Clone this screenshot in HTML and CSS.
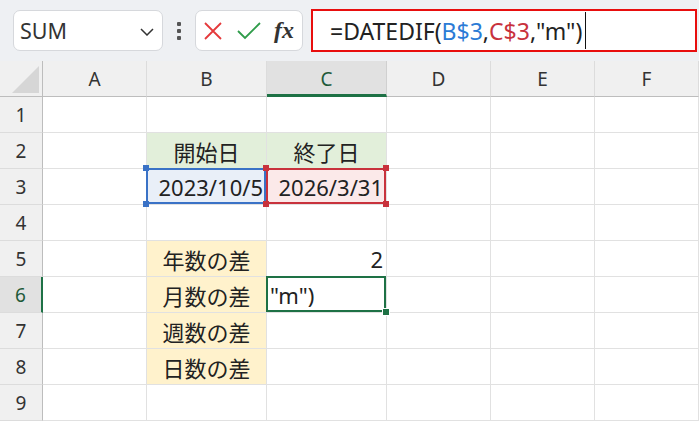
FILE: index.html
```html
<!DOCTYPE html>
<html lang="ja">
<head>
<meta charset="utf-8">
<link rel="stylesheet" href="styles.css">
</head>
<body>
<div class="toolbar">
  <div class="namebox">
    <span class="name">SUM</span>
    <svg class="chev" width="14" height="8" viewBox="0 0 14 8"><path d="M1 1 L7 7 L13 1" fill="none" stroke="#333" stroke-width="1.5"/></svg>
  </div>
  <div class="dots"><i></i><i></i><i></i></div>
  <div class="iconbox">
    <svg width="18" height="18" viewBox="0 0 18 18"><path d="M1 1 L17 17 M17 1 L1 17" stroke="#e5393b" stroke-width="1.8" fill="none"/></svg>
    <svg width="24" height="18" viewBox="0 0 24 18"><path d="M1 9 L8 16 L23 1" stroke="#2f9c4a" stroke-width="1.8" fill="none"/></svg>
    <span class="fx">fx</span>
  </div>
  <div class="formula"><span>=DATEDIF(</span><span class="ref-b">B$3</span><span>,</span><span class="ref-c">C$3</span><span>,"m")</span><span class="caret"></span></div>
</div>
<div class="grid">
  <div class="hd corner"><span class="tri"></span></div>
  <div class="hd col">A</div>
  <div class="hd col">B</div>
  <div class="hd col sel">C</div>
  <div class="hd col">D</div>
  <div class="hd col">E</div>
  <div class="hd col">F</div>

  <div class="hd row">1</div><div class="c"></div><div class="c"></div><div class="c"></div><div class="c"></div><div class="c"></div><div class="c"></div>

  <div class="hd row">2</div><div class="c"></div><div class="c green center">開始日</div><div class="c green center">終了日</div><div class="c"></div><div class="c"></div><div class="c"></div>

  <div class="hd row">3</div><div class="c"></div><div class="c blue right">2023/10/5<span class="rb"></span><span class="sq bl tl"></span><span class="sq bl bl2"></span></div><div class="c pink right">2026/3/31<span class="rc"></span><span class="sq rd tl"></span><span class="sq rd bl2"></span><span class="sq rd tr"></span><span class="sq rd br"></span></div><div class="c"></div><div class="c"></div><div class="c"></div>

  <div class="hd row">4</div><div class="c"></div><div class="c"></div><div class="c"></div><div class="c"></div><div class="c"></div><div class="c"></div>

  <div class="hd row">5</div><div class="c"></div><div class="c yellow center">年数の差</div><div class="c right">2</div><div class="c"></div><div class="c"></div><div class="c"></div>

  <div class="hd row selrow">6</div><div class="c"></div><div class="c yellow center">月数の差</div><div class="c left">"m")<span class="act"></span><span class="handle"></span></div><div class="c"></div><div class="c"></div><div class="c"></div>

  <div class="hd row">7</div><div class="c"></div><div class="c yellow center">週数の差</div><div class="c"></div><div class="c"></div><div class="c"></div><div class="c"></div>

  <div class="hd row">8</div><div class="c"></div><div class="c yellow center">日数の差</div><div class="c"></div><div class="c"></div><div class="c"></div><div class="c"></div>

  <div class="hd row">9</div><div class="c"></div><div class="c"></div><div class="c"></div><div class="c"></div><div class="c"></div><div class="c"></div>
</div>
</body>
</html>
```
FILE: styles.css
```css
* { box-sizing: border-box; }
html, body { margin: 0; padding: 0; }
body {
  width: 699px;
  height: 421px;
  overflow: hidden;
  background: #fff;
  font-family: "Noto Sans", "Noto Sans CJK JP", sans-serif;
  color: #222;
}
.toolbar {
  height: 61px;
  background: #eef0f3;
  display: flex;
  align-items: center;
  padding: 0 2px 0 13px;
}
.namebox {
  width: 150px;
  height: 41px;
  background: #fff;
  border: 1px solid #d6d8dc;
  border-radius: 7px;
  display: flex;
  align-items: center;
  justify-content: space-between;
  padding: 0 8px 0 6px;
}
.name { font-size: 21.5px; color: #333; }
.chev { margin-top: 2px; }
.dots {
  width: 32px;
  display: flex;
  flex-direction: column;
  align-items: center;
  gap: 3px;
}
.dots i { width: 4px; height: 4px; background: #555; border-radius: 1px; display: block; }
.iconbox {
  width: 108px;
  height: 41px;
  background: #fff;
  border: 1px solid #d6d8dc;
  border-radius: 7px;
  display: flex;
  align-items: center;
  padding: 0 0 0 8px;
  gap: 15px;
}
.fx {
  font-family: "Liberation Serif", serif;
  font-style: italic;
  font-weight: bold;
  font-size: 24px;
  color: #333;
  margin-left: -2px;
}
.formula {
  margin-left: 8px;
  flex: 1;
  height: 43px;
  border: 2px solid #e80e0e;
  background: #fff;
  display: flex;
  align-items: center;
  padding-left: 17px;
  font-size: 23px;
  color: #222;
  white-space: pre;
}
.ref-b { color: #2b7bd6; }
.ref-c { color: #c8323c; }
.caret { width: 1px; height: 37px; background: #111; margin-left: 3px; }

.grid {
  display: grid;
  grid-template-columns: 43px 104px 120px 120px 104px 104px 104px;
  grid-template-rows: repeat(10, 36px);
  font-family: "Noto Sans", "Noto Sans CJK JP", sans-serif;
}
.hd {
  background: #f0f0f0;
  color: #333;
  font-family: "Noto Sans", sans-serif;
  font-size: 19px;
  display: flex;
  align-items: center;
  justify-content: center;
}
.corner { border-right: 1px solid #bdbdbd; border-bottom: 1px solid #bdbdbd; position: relative; }
.tri {
  position: absolute;
  right: 3px;
  bottom: 3px;
  width: 0; height: 0;
  border-left: 27px solid transparent;
  border-bottom: 27px solid #d6d6d6;
}
.col { border-right: 1px solid #dcdcdc; border-bottom: 1px solid #bdbdbd; padding-top: 1px; }
.col:last-child { border-right: 0; }
.col.sel { background: #e1e1e1; border-bottom: 3px solid #1e7145; border-right-color: #d0d0d0; color: #1e5a3a; padding-top: 3px; }
.row { border-right: 1px solid #bdbdbd; border-bottom: 1px solid #dcdcdc; }
.row.selrow { background: #e1e1e1; border-right: 2px solid #1e7145; color: #1e5a3a; }
.c {
  position: relative;
  border-right: 1px solid #e1e1e1;
  border-bottom: 1px solid #e1e1e1;
  font-size: 22px;
  display: flex;
  align-items: center;
  color: #222;
  white-space: nowrap;
}
.center { justify-content: center; }
.right { justify-content: flex-end; padding-right: 3px; }
.left { padding-left: 3px; }
.green { background: #e2efda; }
.yellow { background: #fff2cc; }
.blue { background: #e9eff8; }
.pink { background: #fbe9e9; }
.rb, .rc, .act {
  position: absolute;
  top: -1px; left: -1px;
  width: calc(100% + 1px);
  height: calc(100% + 1px);
  border: 2px solid #3a72c6;
  pointer-events: none;
}
.rc { border-color: #c8323c; }
.act { border-color: #1e7145; }
.sq { position: absolute; width: 6px; height: 6px; z-index: 2; }
.sq.bl { background: #3a72c6; }
.sq.rd { background: #c8323c; }
.sq.tl { top: -4px; left: -4px; }
.sq.bl2 { bottom: -3px; left: -4px; }
.sq.tr { top: -4px; right: -3px; }
.sq.br { bottom: -3px; right: -3px; }
.handle {
  position: absolute;
  width: 6px; height: 6px;
  right: -3px; bottom: -3px;
  background: #1e7145;
  outline: 1px solid #fff;
  z-index: 2;
}
```
